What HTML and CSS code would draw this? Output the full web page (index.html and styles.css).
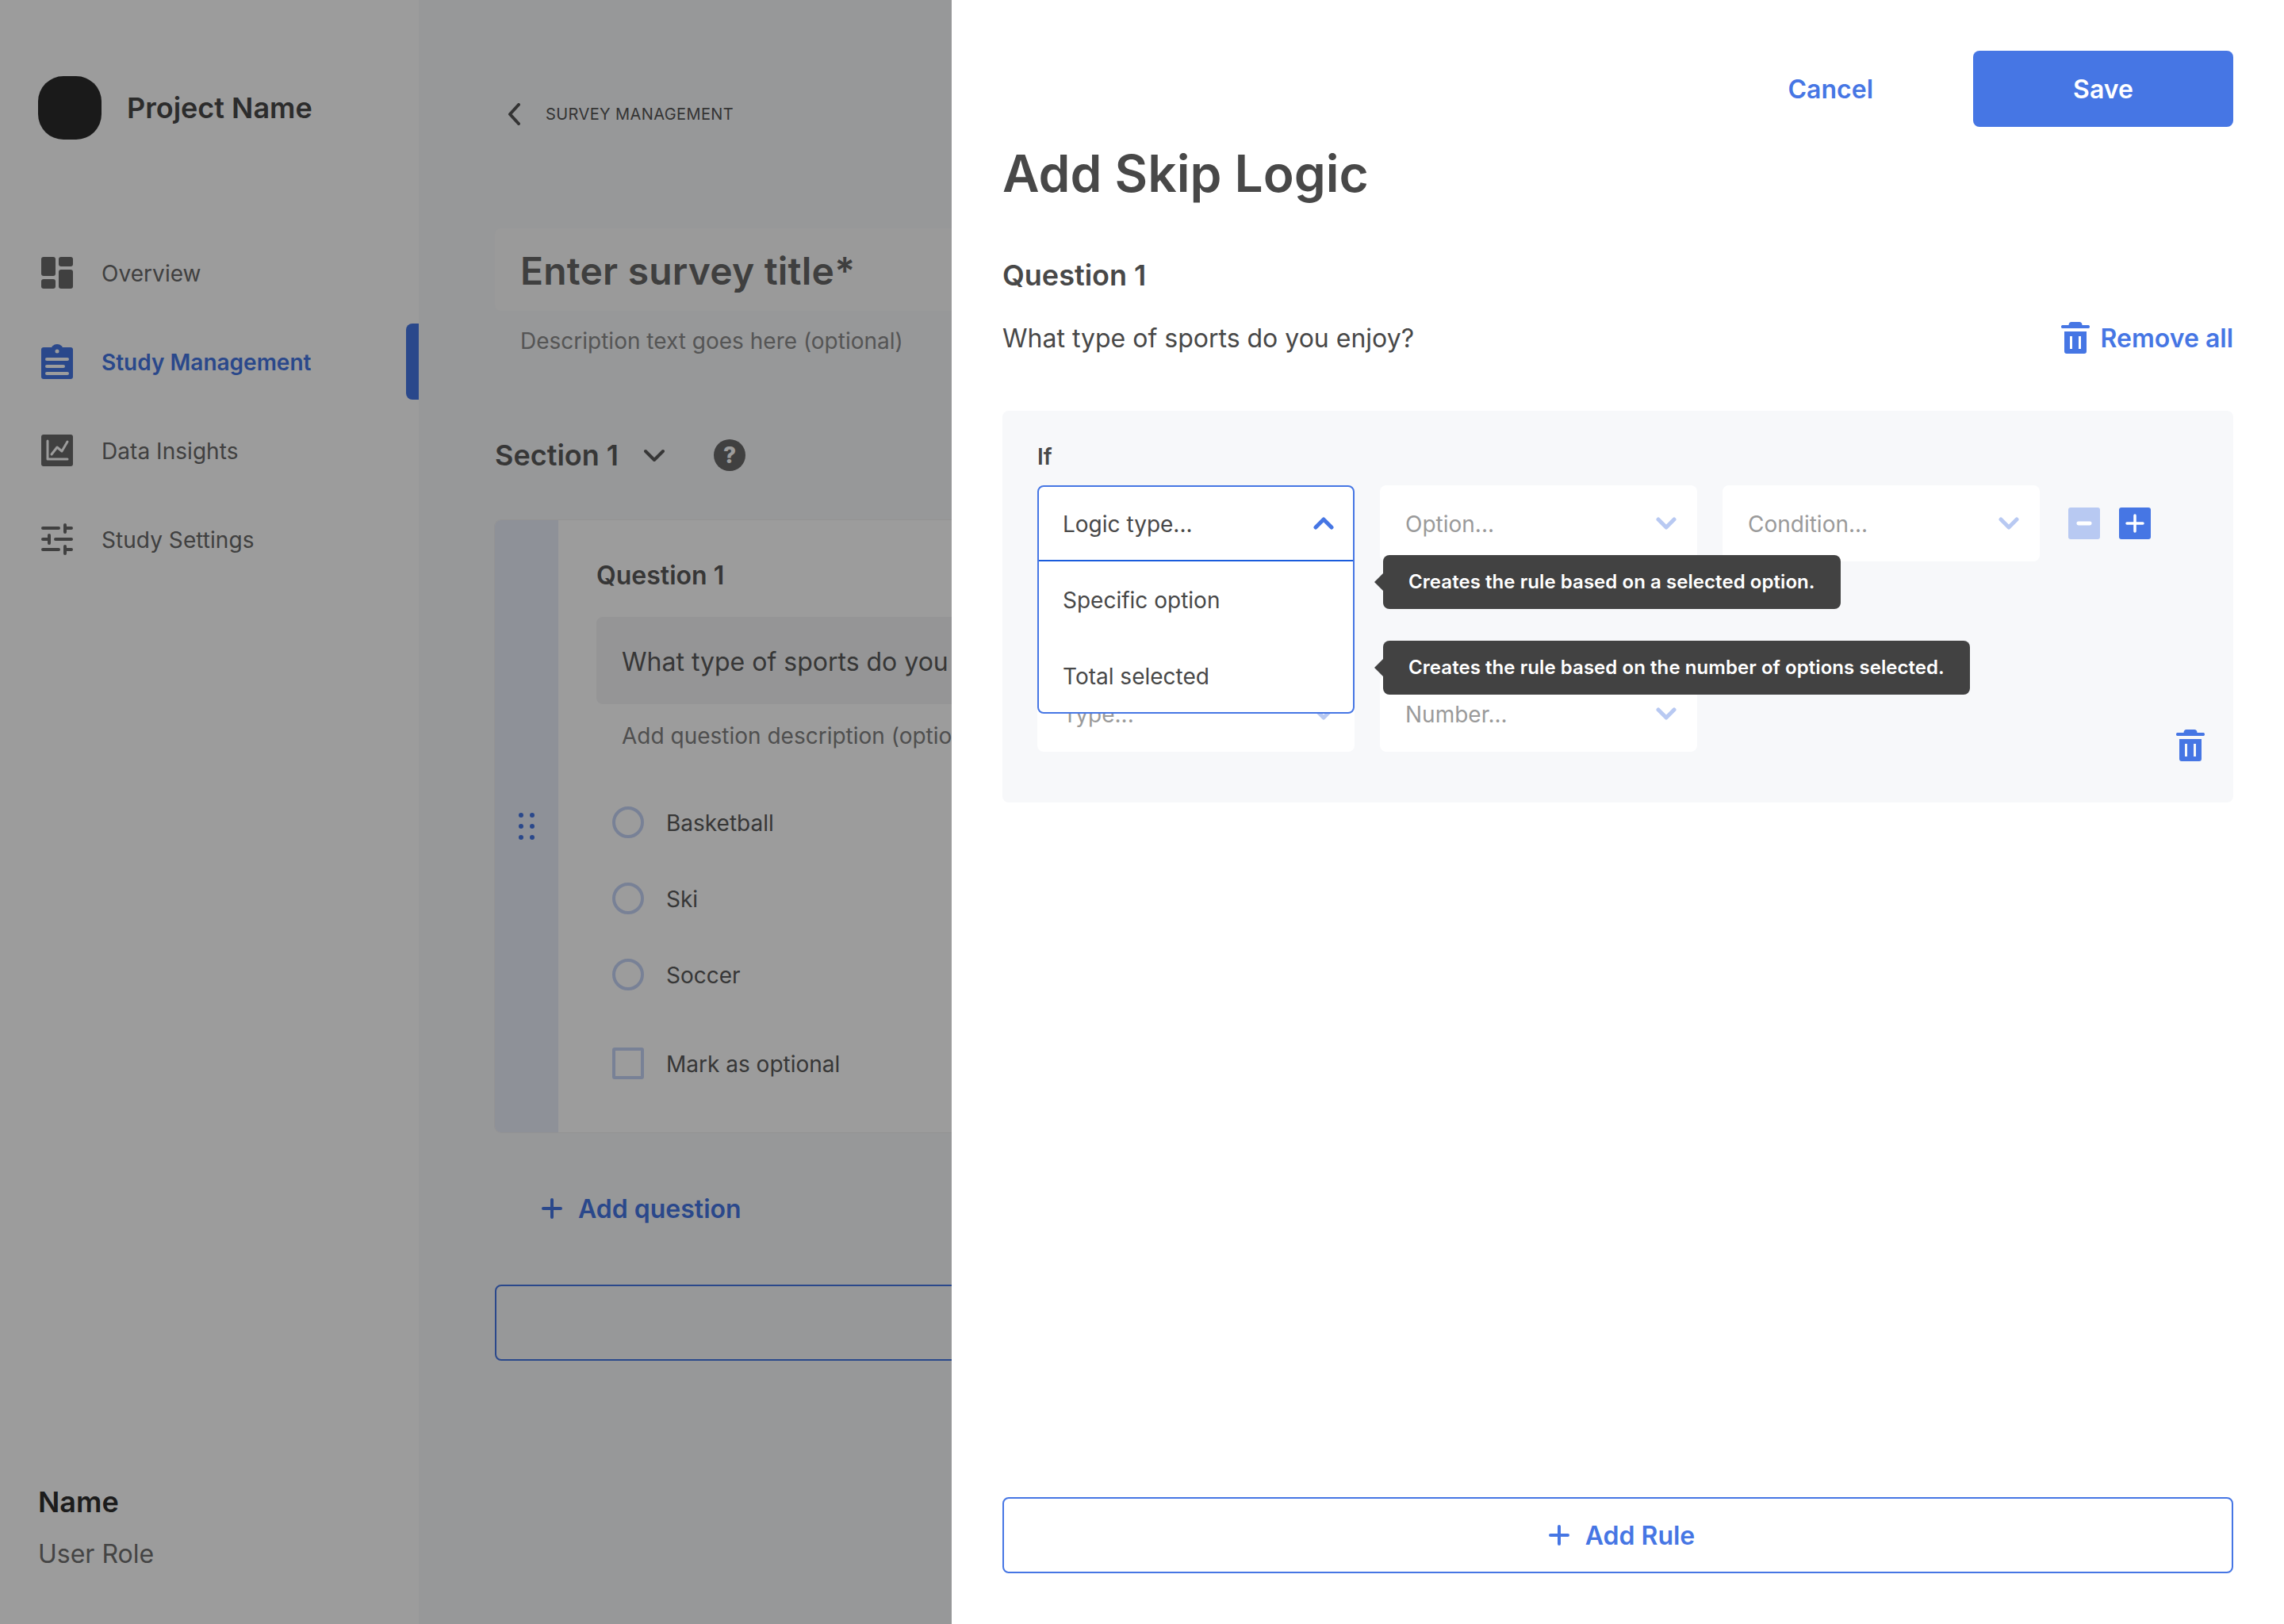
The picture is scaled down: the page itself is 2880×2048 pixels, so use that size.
FILE: index.html
```html
<!DOCTYPE html>
<html lang="en">
<head>
    <meta charset="UTF-8">
    <title>Add Skip Logic</title>
    <link rel="stylesheet" href="styles.css">
</head>
<body>
    <div class="app">
        <aside class="sidebar">
            <div>
                <div class="brand">
                    <div class="brand-logo"></div>
                    <span class="brand-name">Project Name</span>
                </div>
                <nav class="nav">
                    <a class="nav-item">
                        <svg class="nav-icon" viewBox="0 0 40 40" fill="#696969">
                            <rect x="0" y="0" width="18" height="24" rx="3"/>
                            <rect x="0" y="28" width="18" height="12" rx="3"/>
                            <rect x="22" y="0" width="18" height="12" rx="3"/>
                            <rect x="22" y="16" width="18" height="24" rx="3"/>
                        </svg>
                        Overview
                    </a>
                    <a class="nav-item active">
                        <svg class="nav-icon clip" viewBox="0 0 40 44">
                            <circle cx="20" cy="8" r="8" fill="#4676e4"/>
                            <rect x="0" y="4" width="40" height="40" rx="3" fill="#4676e4"/>
                            <circle cx="20" cy="9" r="2.5" fill="#fff"/>
                            <path d="M7 19H33M7 28H28M7 37H33" stroke="#fff" stroke-width="4" stroke-linecap="round"/>
                        </svg>
                        Study Management
                    </a>
                    <a class="nav-item">
                        <svg class="nav-icon" viewBox="0 0 40 40">
                            <rect width="40" height="40" rx="3" fill="#696969"/>
                            <path d="M8 8V31H33" fill="none" stroke="#fff" stroke-width="3" stroke-linecap="round" stroke-linejoin="round"/>
                            <path d="M13 25L20 16L26 21L33 9" fill="none" stroke="#fff" stroke-width="3" stroke-linecap="round" stroke-linejoin="round"/>
                        </svg>
                        Data Insights
                    </a>
                    <a class="nav-item">
                        <svg class="nav-icon" viewBox="0 0 40 40" fill="none" stroke="#696969" stroke-width="4" stroke-linecap="round">
                            <path d="M2 6H22M30 2V11M30 6H38"/>
                            <path d="M2 20H8M10 15V25M18 20H38"/>
                            <path d="M2 33H22M30 29V38M30 33H38"/>
                        </svg>
                        Study Settings
                    </a>
                </nav>
            </div>
            <div class="user">
                <div class="user-name">Name</div>
                <div class="user-role">User Role</div>
            </div>
        </aside>

        <main class="main">
            <div class="crumb">
                <svg class="crumb-icon" viewBox="0 0 16 28" fill="none" stroke="#555" stroke-width="4" stroke-linecap="round" stroke-linejoin="round">
                    <path d="M14 2L3 14L14 26"/>
                </svg>
                <span>SURVEY MANAGEMENT</span>
            </div>
            <div class="survey-title">Enter survey title*</div>
            <div class="survey-desc">Description text goes here (optional)</div>
            <div class="section-row">
                <span class="section-name">Section 1</span>
                <svg class="section-chevron" viewBox="0 0 26 16" fill="none" stroke="#5a5a5a" stroke-width="4" stroke-linecap="round" stroke-linejoin="round">
                    <path d="M2 3L13 14L24 3"/>
                </svg>
                <span class="help">?</span>
            </div>
            <div class="card">
                <div class="card-handle">
                    <svg class="drag" viewBox="0 0 20 34" fill="#4676e4">
                        <circle cx="3" cy="3" r="3"/><circle cx="17" cy="3" r="3"/>
                        <circle cx="3" cy="17" r="3"/><circle cx="17" cy="17" r="3"/>
                        <circle cx="3" cy="31" r="3"/><circle cx="17" cy="31" r="3"/>
                    </svg>
                </div>
                <div class="card-body">
                    <div class="card-label">Question 1</div>
                    <div class="card-field">What type of sports do you enjoy?</div>
                    <div class="card-desc">Add question description (optional)</div>
                    <div class="choice first"><span class="radio"></span><span>Basketball</span></div>
                    <div class="choice"><span class="radio"></span><span>Ski</span></div>
                    <div class="choice"><span class="radio"></span><span>Soccer</span></div>
                    <div class="choice optional"><span class="checkbox"></span><span>Mark as optional</span></div>
                </div>
            </div>
            <div class="add-question">
                <svg class="plus-icon" viewBox="0 0 26 26" fill="none" stroke="#4676e4" stroke-width="4" stroke-linecap="round">
                    <path d="M13 2V24M2 13H24"/>
                </svg>
                Add question
            </div>
            <div class="add-section"></div>
        </main>

        <div class="overlay"></div>

        <section class="drawer">
            <div class="drawer-actions">
                <a class="cancel">Cancel</a>
                <button class="save">Save</button>
            </div>
            <h1 class="drawer-title">Add Skip Logic</h1>
            <h2 class="question-label">Question 1</h2>
            <div class="question-row">
                <span>What type of sports do you enjoy?</span>
                <a class="remove-all">
                    <svg class="trash" viewBox="0 0 36 40" fill="#4676e4">
                        <path d="M9.5 4C9.5 1.5 11 0 13 0H23C25 0 26.5 1.5 26.5 4H34.5C36.5 4 36.5 8 34.5 8H1.5C-.5 8 -.5 4 1.5 4Z"/>
                        <path fill-rule="evenodd" d="M4 12H32V37C32 39 31 40 29 40H7C5 40 4 39 4 37ZM11 18V34H14V18ZM22 18V34H25V18Z"/>
                    </svg>
                    Remove all
                </a>
            </div>

            <div class="rule">
                <div class="rule-if">If</div>
                <div class="rule-row">
                    <div class="select open">
                        <div class="menu">
                            <div class="menu-head">
                                <span class="menu-text">Logic type...</span>
                                <svg class="chevron" viewBox="0 0 26 16" fill="none" stroke="#4676e4" stroke-width="5" stroke-linecap="round" stroke-linejoin="round">
                                    <path d="M3 13L13 3L23 13"/>
                                </svg>
                            </div>
                            <div class="menu-option"><span class="menu-text">Specific option</span></div>
                            <div class="menu-option"><span class="menu-text">Total selected</span></div>
                        </div>
                    </div>
                    <div class="select">
                        <span class="select-text">Option...</span>
                        <svg class="chevron" viewBox="0 0 26 16" fill="none" stroke="#b8c9f2" stroke-width="5" stroke-linecap="round" stroke-linejoin="round">
                            <path d="M3 3L13 13L23 3"/>
                        </svg>
                    </div>
                    <div class="select">
                        <span class="select-text">Condition...</span>
                        <svg class="chevron" viewBox="0 0 26 16" fill="none" stroke="#b8c9f2" stroke-width="5" stroke-linecap="round" stroke-linejoin="round">
                            <path d="M3 3L13 13L23 3"/>
                        </svg>
                    </div>
                    <div class="stepper">
                        <span class="step step-off">
                            <svg viewBox="0 0 20 20" stroke="#fff" stroke-width="4" stroke-linecap="round"><path d="M4 10H16"/></svg>
                        </span>
                        <span class="step">
                            <svg viewBox="0 0 24 24" stroke="#fff" stroke-width="3.5" stroke-linecap="round"><path d="M12 2V22M2 12H22"/></svg>
                        </span>
                    </div>
                </div>
                <div class="rule-row second">
                    <div class="select">
                        <span class="select-text">Type...</span>
                        <svg class="chevron" viewBox="0 0 26 16" fill="none" stroke="#b8c9f2" stroke-width="5" stroke-linecap="round" stroke-linejoin="round">
                            <path d="M3 3L13 13L23 3"/>
                        </svg>
                    </div>
                    <div class="select">
                        <span class="select-text">Number...</span>
                        <svg class="chevron" viewBox="0 0 26 16" fill="none" stroke="#b8c9f2" stroke-width="5" stroke-linecap="round" stroke-linejoin="round">
                            <path d="M3 3L13 13L23 3"/>
                        </svg>
                    </div>
                    <svg class="trash rule-trash" viewBox="0 0 36 40" fill="#4676e4">
                        <path d="M9.5 4C9.5 1.5 11 0 13 0H23C25 0 26.5 1.5 26.5 4H34.5C36.5 4 36.5 8 34.5 8H1.5C-.5 8 -.5 4 1.5 4Z"/>
                        <path fill-rule="evenodd" d="M4 12H32V37C32 39 31 40 29 40H7C5 40 4 39 4 37ZM11 18V34H14V18ZM22 18V34H25V18Z"/>
                    </svg>
                </div>
                <div class="tooltip tip-one">Creates the rule based on a selected option.</div>
                <div class="tooltip tip-two">Creates the rule based on the number of options selected.</div>
            </div>

            <button class="add-rule">
                <svg class="plus-icon" viewBox="0 0 26 26" fill="none" stroke="#4676e4" stroke-width="4" stroke-linecap="round">
                    <path d="M13 2V24M2 13H24"/>
                </svg>
                Add Rule
            </button>
        </section>
    </div>
</body>
</html>
```

FILE: styles.css
```css
* {
    box-sizing: border-box;
}
body {
    margin: 0;
    font-family: "Inter", "Noto Sans", sans-serif;
    background-color: #f7f8fa;
}
.app {
    position: relative;
    display: flex;
    width: 2880px;
    height: 2048px;
    overflow: hidden;
}

/* sidebar */
.sidebar {
    display: flex;
    flex-direction: column;
    justify-content: space-between;
    flex: 0 0 528px;
    padding: 96px 0 66px;
    background-color: #fff;
}
.brand {
    display: flex;
    align-items: center;
    gap: 32px;
    padding-left: 48px;
}
.brand-logo {
    width: 80px;
    height: 80px;
    border-radius: 32px;
    background-color: #2b2b2b;
}
.brand-name {
    font-size: 36px;
    font-weight: 600;
    color: #484848;
}
.nav {
    margin-top: 113px;
}
.nav-item {
    display: flex;
    align-items: center;
    gap: 36px;
    height: 112px;
    padding-left: 52px;
    font-size: 28px;
    letter-spacing: 0.05px;
    color: #696969;
}
.nav-icon {
    width: 40px;
    height: 40px;
    flex: none;
    margin-top: -2px;
}
.nav-icon.clip {
    height: 44px;
}
.nav-item.active {
    position: relative;
    font-weight: 600;
    letter-spacing: 0;
    color: #4676e4;
}
.nav-item.active::after {
    content: "";
    position: absolute;
    top: 7px;
    right: 0;
    width: 16px;
    height: 96px;
    border-radius: 8px 0 0 8px;
    background-color: #4676e4;
}
.user {
    padding-left: 48px;
}
.user-name {
    font-size: 36px;
    font-weight: 600;
    line-height: 44px;
    color: #2e2e2e;
}
.user-role {
    margin-top: 22px;
    font-size: 32px;
    line-height: 44px;
    color: #707070;
}

/* survey editor behind the drawer */
.main {
    flex: 1;
    min-width: 0;
    padding: 124px 0 0 96px;
}
.crumb {
    display: flex;
    align-items: center;
    gap: 32px;
    height: 40px;
    padding-left: 16px;
    font-size: 20px;
    letter-spacing: 0.4px;
    color: #555;
}
.crumb-icon {
    width: 16px;
    height: 28px;
}
.survey-title {
    height: 104px;
    margin-top: 124px;
    padding-left: 32px;
    border-radius: 8px;
    font-size: 48px;
    font-weight: 600;
    line-height: 107px;
    letter-spacing: 0.2px;
    color: #686868;
    background-color: #fcfcfc;
}
.survey-desc {
    margin-top: 18px;
    padding-left: 32px;
    font-size: 28px;
    line-height: 40px;
    color: #8c8c8c;
}
.section-row {
    display: flex;
    align-items: center;
    height: 44px;
    margin-top: 102px;
}
.section-name {
    font-size: 36px;
    font-weight: 600;
    color: #5a5a5a;
}
.section-chevron {
    width: 26px;
    height: 16px;
    margin-left: 32px;
}
.help {
    width: 40px;
    height: 40px;
    margin-left: 62px;
    border-radius: 50%;
    font-size: 28px;
    font-weight: 800;
    line-height: 40px;
    text-align: center;
    color: #fff;
    background-color: #696969;
}
.card {
    display: flex;
    height: 772px;
    margin-top: 60px;
    border-radius: 8px;
    background-color: #fff;
    box-shadow: 0 0 0 1px #f0f0f0;
}
.card-handle {
    display: flex;
    align-items: center;
    justify-content: center;
    flex: 0 0 80px;
    border-radius: 8px 0 0 8px;
    background-color: #e8edf9;
}
.drag {
    width: 20px;
    height: 34px;
}
.card-body {
    flex: 1;
    padding: 48px 0 0 48px;
    white-space: nowrap;
}
.card-label {
    font-size: 32px;
    font-weight: 600;
    line-height: 44px;
    color: #5a5a5a;
}
.card-field {
    height: 110px;
    margin-top: 30px;
    padding-left: 32px;
    border-radius: 8px;
    font-size: 32px;
    line-height: 114px;
    color: #5a5a5a;
    background-color: #f3f4f5;
}
.card-desc {
    margin-top: 20px;
    padding-left: 32px;
    font-size: 28px;
    line-height: 40px;
    color: #828282;
}
.choice {
    display: flex;
    align-items: center;
    gap: 28px;
    height: 40px;
    margin-top: 56px;
    padding-left: 20px;
    font-size: 28px;
    color: #5a5a5a;
}
.choice span:last-child {
    padding-top: 2px;
}
.choice.first {
    margin-top: 69px;
}
.choice.optional {
    margin-top: 72px;
}
.radio,
.checkbox {
    flex: none;
    width: 40px;
    height: 40px;
    border: 4px solid #c5d3f5;
    border-radius: 50%;
}
.checkbox {
    border-radius: 3px;
}
.add-question {
    display: flex;
    align-items: center;
    gap: 20px;
    height: 44px;
    margin-top: 74px;
    padding-left: 59px;
    font-size: 32px;
    font-weight: 600;
    color: #4676e4;
}
.plus-icon {
    width: 26px;
    height: 26px;
    flex: none;
}
.add-section {
    height: 96px;
    margin-top: 74px;
    border: 2px solid #4676e4;
    border-radius: 8px;
}
.overlay {
    position: absolute;
    inset: 0;
    background-color: rgba(0, 0, 0, 0.39);
}

/* drawer */
.drawer {
    position: absolute;
    top: 0;
    right: 0;
    bottom: 0;
    display: flex;
    flex-direction: column;
    width: 1680px;
    padding: 64px;
    color: #484848;
    background-color: #fff;
}
.drawer-actions {
    display: flex;
    align-items: center;
    justify-content: flex-end;
    gap: 126px;
}
.cancel {
    font-size: 32px;
    font-weight: 600;
    color: #4676e4;
}
.save {
    width: 328px;
    height: 96px;
    border: none;
    border-radius: 8px;
    font-family: inherit;
    font-size: 32px;
    font-weight: 600;
    color: #fff;
    background-color: #4676e4;
}
.drawer-title {
    margin: 18px 0 0;
    font-size: 64px;
    font-weight: 600;
    line-height: 82px;
}
.question-label {
    margin: 65px 0 0;
    font-size: 36px;
    font-weight: 600;
    line-height: 44px;
}
.question-row {
    display: flex;
    align-items: center;
    justify-content: space-between;
    height: 40px;
    margin-top: 37px;
    font-size: 32px;
}
.remove-all {
    display: flex;
    align-items: center;
    gap: 14px;
    font-weight: 600;
    color: #4676e4;
}
.trash {
    width: 36px;
    height: 40px;
    flex: none;
}
.rule {
    position: relative;
    height: 494px;
    margin-top: 72px;
    padding: 40px 36px 0 44px;
    border-radius: 8px;
    background-color: #f7f8fa;
}
.rule-if {
    height: 36px;
    margin-bottom: 18px;
    font-size: 28px;
    font-weight: 600;
    line-height: 36px;
}
.rule-row {
    display: flex;
    gap: 32px;
}
.rule-row.second {
    margin-top: 144px;
}
.select {
    position: relative;
    display: flex;
    align-items: center;
    justify-content: space-between;
    width: 400px;
    height: 96px;
    padding: 0 26px 0 32px;
    border-radius: 8px;
    background-color: #fff;
}
.select.open {
    z-index: 1;
}
.select-text,
.menu-text {
    padding-top: 2px;
    font-size: 28px;
    color: #9a9a9a;
}
.menu-text {
    color: #484848;
}
.chevron {
    width: 26px;
    height: 16px;
    flex: none;
}
.menu {
    position: absolute;
    top: 0;
    left: 0;
    width: 100%;
    height: 288px;
    border: 2px solid #4676e4;
    border-radius: 8px;
    background-color: #fff;
}
.menu-head {
    display: flex;
    align-items: center;
    justify-content: space-between;
    height: 94px;
    padding: 0 24px 0 30px;
    border-bottom: 2px solid #1a5cdc;
}
.menu-option {
    display: flex;
    align-items: center;
    height: 96px;
    padding-left: 30px;
}
.stepper {
    display: flex;
    gap: 24px;
    margin: 28px 0 0 4px;
}
.step {
    display: flex;
    align-items: center;
    justify-content: center;
    width: 40px;
    height: 40px;
    border-radius: 3px;
    background-color: #4676e4;
}
.step svg {
    width: 24px;
    height: 24px;
    fill: none;
}
.step-off {
    background-color: #b8c9f2;
}
.rule-trash {
    align-self: flex-start;
    margin: 68px 0 0 auto;
}
.tooltip {
    position: absolute;
    z-index: 2;
    left: 480px;
    height: 68px;
    padding: 0 32px;
    border-radius: 8px;
    font-size: 24px;
    font-weight: 600;
    line-height: 68px;
    letter-spacing: 0.06px;
    white-space: nowrap;
    color: #fff;
    background-color: #424242;
}
.tooltip::before {
    content: "";
    position: absolute;
    top: 22px;
    left: -11px;
    width: 12px;
    height: 24px;
    background-color: #424242;
    clip-path: polygon(100% 0, 100% 100%, 0 50%);
}
.tip-one {
    top: 182px;
}
.tip-two {
    top: 290px;
}
.add-rule {
    display: flex;
    align-items: center;
    justify-content: center;
    gap: 20px;
    height: 96px;
    margin-top: auto;
    padding-left: 16px;
    border: 2px solid #4676e4;
    border-radius: 8px;
    font-family: inherit;
    font-size: 32px;
    font-weight: 600;
    color: #4676e4;
    background-color: #fff;
}
```
